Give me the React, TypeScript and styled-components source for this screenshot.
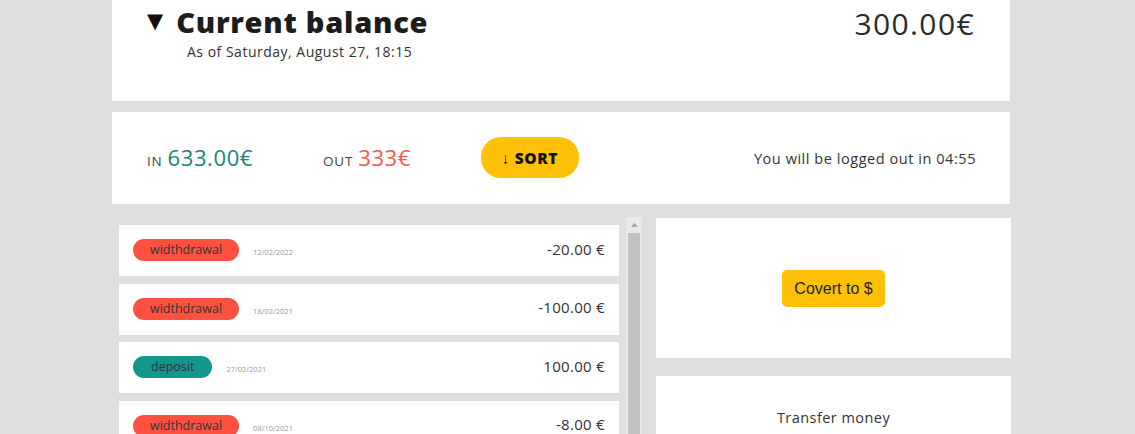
import React from "react";
import styled, { createGlobalStyle } from "styled-components";

const Global = createGlobalStyle`
  html, body { margin: 0; padding: 0; height: 434px; overflow: hidden; }
  body {
    background: #dfdfdf;
    font-family: "Open Sans", "DejaVu Sans", sans-serif;
    color: #444;
  }
`;

const Page = styled.main`
  width: 898px;
  padding-left: 112px;
  display: flex;
  flex-direction: column;
`;

const Card = styled.section`
  background: #fff;
`;

const BalanceCard = styled(Card)`
  height: 101px;
  box-sizing: border-box;
  padding: 4px 35px 0 35px;
  display: flex;
  justify-content: space-between;
  align-items: flex-start;
`;

const TitleBlock = styled.div`
  display: flex;
  flex-direction: column;
`;

const TitleRow = styled.h1`
  margin: 0;
  display: flex;
  align-items: center;
  gap: 13px;
  font-size: 29px;
  line-height: 35px;
  font-weight: 800;
  color: #1c1c1c;
  letter-spacing: 0.75px;
`;

const Marker = styled.span`
  font-size: 21px;
  font-family: "DejaVu Sans", sans-serif;
  color: #111;
  letter-spacing: 0;
`;

const Subtitle = styled.p`
  margin: 3.5px 0 0 40px;
  font-size: 14px;
  line-height: 18px;
  letter-spacing: 0.5px;
  color: #333;
`;

const BigAmount = styled.p`
  margin: 0;
  font-size: 30px;
  line-height: 40px;
  color: #2a2a2a;
  letter-spacing: 1.4px;
`;

const SummaryCard = styled(Card)`
  margin-top: 11px;
  height: 92px;
  box-sizing: border-box;
  padding: 0 34px 0 35px;
  display: flex;
  align-items: center;
  gap: 70px;
`;

const Stat = styled.div`
  display: flex;
  align-items: baseline;
  gap: 5px;
  margin-top: -2px;
`;

const StatLabel = styled.span`
  font-size: 13.5px;
  letter-spacing: 0.8px;
  text-transform: uppercase;
  color: #444;
`;

const StatValue = styled.span<{ $tone: "in" | "out" }>`
  font-size: 22px;
  letter-spacing: 0.6px;
  color: ${(p) => (p.$tone === "in" ? "#17857a" : "#f5584b")};
`;

const SortButton = styled.button`
  height: 41px;
  width: 98px;
  border: none;
  border-radius: 20px;
  background: #ffc107;
  font-family: "Open Sans", sans-serif;
  font-weight: 800;
  font-size: 15.5px;
  letter-spacing: 0.6px;
  color: #111;
  display: flex;
  align-items: center;
  justify-content: center;
  gap: 3px;
  margin-top: -1px;
`;

const Timer = styled.p`
  margin: 0 0 0 auto;
  font-size: 14.5px;
  letter-spacing: 0.55px;
  color: #333;
`;

const Lower = styled.div`
  margin-top: 13px;
  display: grid;
  grid-template-columns: 530px 355px;
  column-gap: 14px;
  align-items: start;
`;

const ListPane = styled.div`
  display: flex;
  height: 240px;
`;

const Movements = styled.ul`
  list-style: none;
  margin: 0;
  padding: 8px 7px 0 7px;
  width: 500px;
  display: flex;
  flex-direction: column;
  gap: 7.6px;
  overflow: hidden;
`;

const Movement = styled.li`
  flex: none;
  height: 51px;
  box-sizing: border-box;
  background: #fff;
  display: flex;
  align-items: center;
  padding: 0 14px 0 14px;
`;

const TypeBadge = styled.span<{ $kind: "deposit" | "withdrawal" }>`
  flex: none;
  height: 22px;
  box-sizing: border-box;
  padding: 0 ${(p) => (p.$kind === "deposit" ? "18px" : "17px")};
  border-radius: 11px;
  background: ${(p) => (p.$kind === "deposit" ? "#12978a" : "#ff5142")};
  color: #333;
  font-size: 12.5px;
  line-height: 22px;
  margin-top: -1px;
`;

const DateText = styled.span`
  margin-left: 14px;
  font-size: 7.5px;
  color: #999;
  margin-top: 3px;
`;

const MoveAmount = styled.span`
  margin-left: auto;
  font-size: 15px;
  letter-spacing: 0.3px;
  color: #333;
  margin-top: -4px;
`;

const ScrollTrack = styled.div`
  width: 16px;
  background: #e9e9e9;
  display: flex;
  flex-direction: column;
  align-items: center;
`;

const ScrollArrow = styled.div`
  height: 16px;
  display: flex;
  align-items: center;
  justify-content: center;
  width: 100%;
`;

const ScrollThumb = styled.div`
  width: 12px;
  flex: 1;
  background: #c1c1c1;
`;

const SideColumn = styled.div`
  display: flex;
  flex-direction: column;
  gap: 18px;
  margin-top: 1px;
`;

const SideCard = styled(Card)<{ $height: number }>`
  height: ${(p) => p.$height}px;
  display: flex;
  align-items: center;
  justify-content: center;
`;

const ConvertButton = styled.button`
  font-family: "Liberation Sans", Arial, sans-serif;
  font-size: 16px;
  color: #222;
  background: #ffc107;
  border: none;
  border-radius: 5px;
  height: 37px;
  padding: 0 12.5px;
  margin-top: 1px;
`;

const TransferTitle = styled.h2`
  margin: 0;
  align-self: flex-start;
  padding-top: 32px;
  font-size: 14.5px;
  letter-spacing: 0.45px;
  font-weight: 400;
  color: #333;
`;

const movements: { kind: "deposit" | "withdrawal"; date: string; amount: string }[] = [
  { kind: "withdrawal", date: "12/02/2022", amount: "-20.00 €" },
  { kind: "withdrawal", date: "18/02/2021", amount: "-100.00 €" },
  { kind: "deposit", date: "27/02/2021", amount: "100.00 €" },
  { kind: "withdrawal", date: "08/10/2021", amount: "-8.00 €" },
];

export default function App() {
  return (
    <>
      <Global />
      <Page>
        <BalanceCard>
          <TitleBlock>
            <TitleRow>
              <Marker>▼</Marker>
              Current balance
            </TitleRow>
            <Subtitle>As of Saturday, August 27, 18:15</Subtitle>
          </TitleBlock>
          <BigAmount>300.00€</BigAmount>
        </BalanceCard>

        <SummaryCard>
          <Stat>
            <StatLabel>In</StatLabel>
            <StatValue $tone="in">633.00€</StatValue>
          </Stat>
          <Stat>
            <StatLabel>Out</StatLabel>
            <StatValue $tone="out">333€</StatValue>
          </Stat>
          <SortButton>↓ SORT</SortButton>
          <Timer>You will be logged out in 04:55</Timer>
        </SummaryCard>

        <Lower>
          <ListPane>
            <Movements>
              {movements.map((m, i) => (
                <Movement key={i}>
                  <TypeBadge $kind={m.kind}>{m.kind === "deposit" ? "deposit" : "widthdrawal"}</TypeBadge>
                  <DateText>{m.date}</DateText>
                  <MoveAmount>{m.amount}</MoveAmount>
                </Movement>
              ))}
            </Movements>
            <ScrollTrack>
              <ScrollArrow>
                <svg width="7" height="4" viewBox="0 0 7 4">
                  <path d="M0 4 L3.5 0 L7 4 Z" fill="#a3a3a3" />
                </svg>
              </ScrollArrow>
              <ScrollThumb />
            </ScrollTrack>
          </ListPane>

          <SideColumn>
            <SideCard $height={140}>
              <ConvertButton>Covert to $</ConvertButton>
            </SideCard>
            <SideCard $height={120}>
              <TransferTitle>Transfer money</TransferTitle>
            </SideCard>
          </SideColumn>
        </Lower>
      </Page>
    </>
  );
}
